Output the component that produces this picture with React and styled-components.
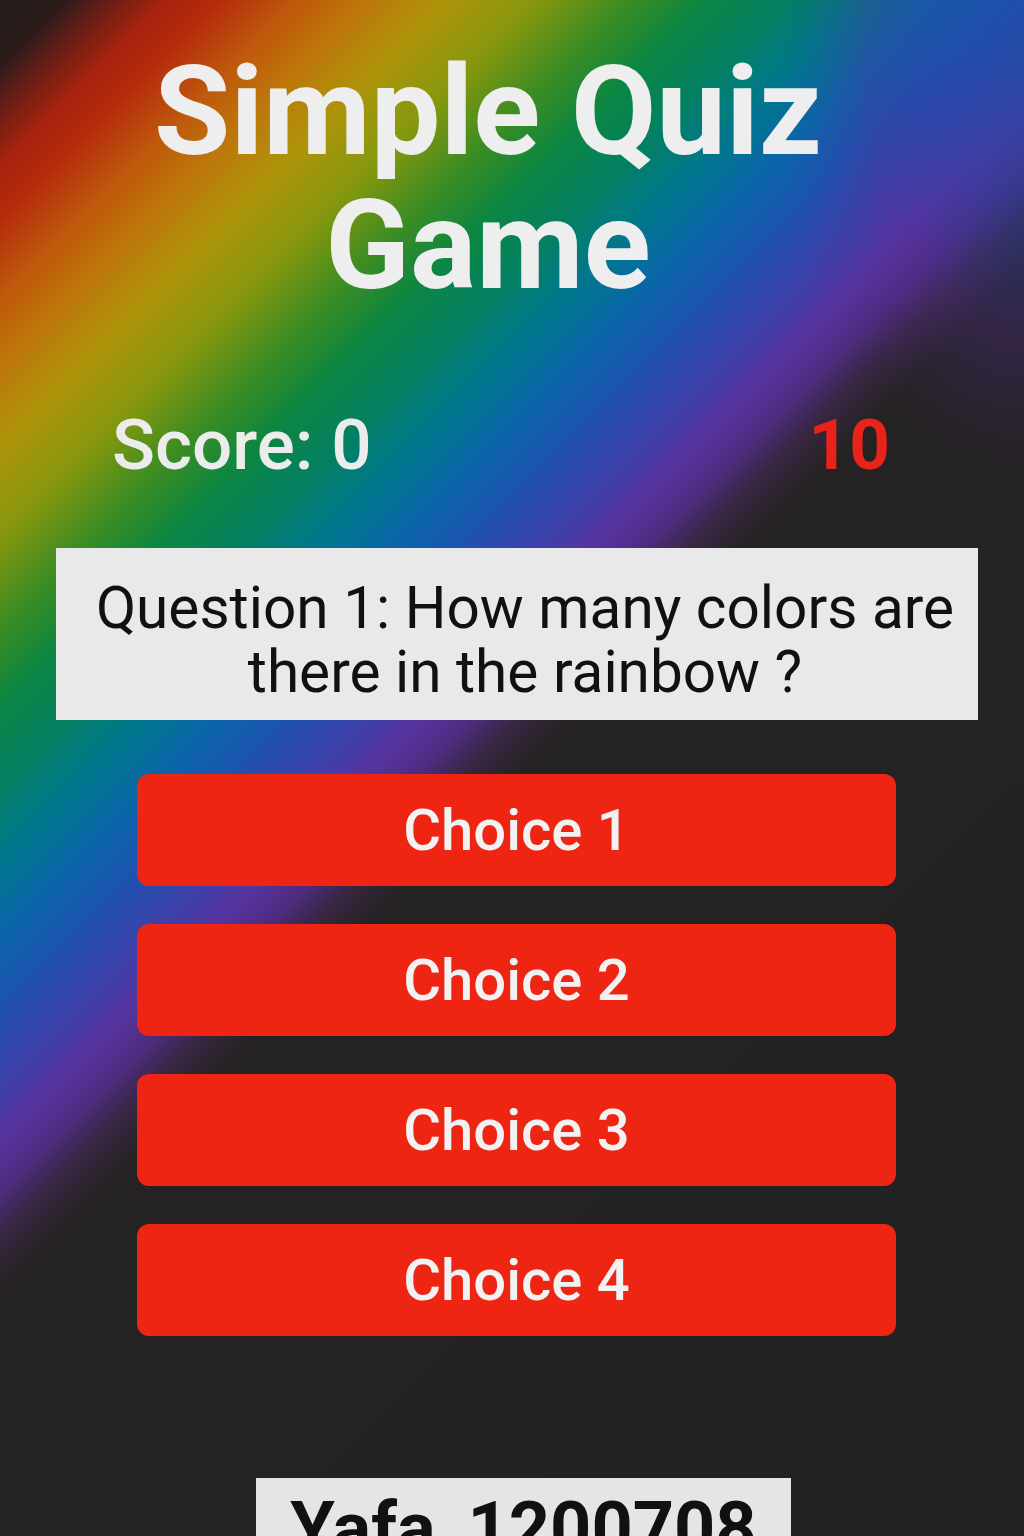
import React from "react";
import styled, { createGlobalStyle } from "styled-components";

const GlobalStyle = createGlobalStyle`
  html, body {
    margin: 0;
    padding: 0;
    background: #222222;
  }
  body {
    font-family: Roboto, "Noto Sans", "Liberation Sans", sans-serif;
  }
  * { box-sizing: border-box; }
`;

const Page = styled.main`
  width: 1024px;
  height: 1536px;
  overflow: hidden;
  display: flex;
  flex-direction: column;
  align-items: center;
  background:
    radial-gradient(
      ellipse 240px 420px at 1024px 60px,
      rgba(24, 82, 168, 0.6) 0%,
      rgba(40, 70, 168, 0.45) 35%,
      rgba(84, 46, 152, 0.3) 65%,
      rgba(84, 46, 152, 0.1) 85%,
      rgba(84, 46, 152, 0) 100%
    ),
    linear-gradient(
      135deg,
      #221d1d 0%,
      #2a1c1a 2.5%,
      #6e1e14 4.5%,
      #a6230f 6.5%,
      #b42a0c 8.5%,
      #bf560c 11.5%,
      #bd780a 14.5%,
      #ad940a 17.5%,
      #86980e 21%,
      #3c8c22 24.5%,
      #0c8640 27.5%,
      #037f66 31%,
      #00788a 33.5%,
      #0a66a8 36.5%,
      #1a55b0 39%,
      #3a42aa 42%,
      #5634a0 44.5%,
      #4e2c80 46.5%,
      #36263f 48.5%,
      #252223 50.5%,
      #222222 100%
    );
`;

const Title = styled.h1`
  width: 720px;
  margin: 45px 48px 0 0;
  font-family: Roboto, "Liberation Sans", sans-serif;
  font-weight: 700;
  font-size: 124px;
  line-height: 134px;
  color: #eeeeee;
  text-align: center;
`;

const ScoreRow = styled.div`
  align-self: stretch;
  display: flex;
  justify-content: space-between;
  align-items: baseline;
  margin-top: 90px;
  padding: 0 134px 0 112px;
  font-size: 71px;
`;

const Score = styled.span`
  font-weight: 500;
  color: #ececec;
`;

const Timer = styled.span`
  font-weight: 700;
  color: #e8231a;
`;

const QuestionBox = styled.div`
  align-self: flex-start;
  margin: 62px 0 0 56px;
  width: 922px;
  padding: 28px 12px 16px 28px;
  background: #e9e9e9;
  color: #111111;
  font-weight: 400;
  font-size: 58.5px;
  line-height: 64px;
  text-align: center;
`;

const Choices = styled.div`
  align-self: flex-start;
  margin: 54px 0 0 137px;
  width: 759px;
  display: flex;
  flex-direction: column;
  gap: 38px;
`;

const ChoiceButton = styled.button`
  height: 112px;
  border: none;
  border-radius: 12px;
  background: #ef2513;
  color: #f2f2f2;
  font-family: Roboto, "Liberation Sans", sans-serif;
  font-weight: 500;
  font-size: 58px;
  cursor: pointer;
`;

const NameTag = styled.div`
  align-self: flex-start;
  margin: 142px 0 0 256px;
  width: 535px;
  padding: 8px 0 40px;
  background: #e6e4e4;
  color: #111111;
  font-weight: 700;
  font-size: 72px;
  text-align: center;
`;

const choices = ["Choice 1", "Choice 2", "Choice 3", "Choice 4"];

export default function App() {
  return (
    <>
      <GlobalStyle />
      <Page>
        <Title>Simple Quiz Game</Title>
        <ScoreRow>
          <Score>Score: 0</Score>
          <Timer>10</Timer>
        </ScoreRow>
        <QuestionBox>Question 1: How many colors are there in the rainbow ?</QuestionBox>
        <Choices>
          {choices.map((c) => (
            <ChoiceButton key={c}>{c}</ChoiceButton>
          ))}
        </Choices>
        <NameTag>Yafa_1200708</NameTag>
      </Page>
    </>
  );
}
